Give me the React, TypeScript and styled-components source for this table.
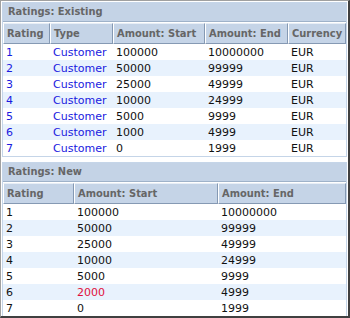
import React from "react";
import styled, { createGlobalStyle } from "styled-components";

const Global = createGlobalStyle`
  html, body { margin: 0; padding: 0; background: #fff; }
  body { font-family: "DejaVu Sans", Verdana, sans-serif; font-size: 11px; }
`;

const Frame = styled.div`
  width: 350px;
  height: 318px;
  box-sizing: border-box;
  border-style: solid;
  border-width: 1px 2px 2px 1px;
  border-color: #a0a0a0 #404040 #404040 #a0a0a0;
  padding: 1px;
  display: flex;
  flex-direction: column;
  gap: 5px;
  overflow: hidden;
`;

const Panel = styled.section`
  border: 1px solid #c5d5e8;
  display: flex;
  flex-direction: column;
`;

const TitleBar = styled.div`
  height: 18px;
  line-height: 18px;
  padding-left: 5px;
  background: #c4d3e6;
  border-bottom: 1px solid #9fb2c9;
  color: #666;
  font-family: "DejaVu Sans Condensed", "DejaVu Sans", sans-serif;
  font-weight: bold;
`;

const Table = styled.table`
  width: 100%;
  border-collapse: separate;
  border-spacing: 0;
  table-layout: fixed;
  margin-top: 1px;
`;

const Th = styled.th`
  height: 19px;
  padding: 0 0 0 3px;
  text-align: left;
  font-family: "DejaVu Sans Condensed", "DejaVu Sans", sans-serif;
  font-weight: bold;
  color: #666;
  background: #c5d4e7;
  border-top: 1px solid #e8eef6;
  border-left: 1px solid #fff;
  border-right: 1px solid #8599b3;
  border-bottom: 1px solid #8599b3;
  white-space: nowrap;
  overflow: hidden;
`;

const Tr = styled.tr<{ $alt: boolean }>`
  background: ${(p) => (p.$alt ? "#e8f2fd" : "#fff")};
`;

const Td = styled.td<{ $tone?: "link" | "red" | "plain" }>`
  height: 16px;
  padding: 0 0 0 3px;
  white-space: nowrap;
  color: ${(p) =>
    p.$tone === "link" ? "#1a1ae0" : p.$tone === "red" ? "#e0103c" : "#111"};
`;

const existing = [
  ["1", "100000", "10000000"],
  ["2", "50000", "99999"],
  ["3", "25000", "49999"],
  ["4", "10000", "24999"],
  ["5", "5000", "9999"],
  ["6", "1000", "4999"],
  ["7", "0", "1999"],
];

const fresh = [
  ["1", "100000", "10000000"],
  ["2", "50000", "99999"],
  ["3", "25000", "49999"],
  ["4", "10000", "24999"],
  ["5", "5000", "9999"],
  ["6", "2000", "4999"],
  ["7", "0", "1999"],
];

export default function App() {
  return (
    <>
      <Global />
      <Frame>
        <Panel>
          <TitleBar>Ratings: Existing</TitleBar>
          <Table>
            <colgroup>
              <col style={{ width: 47 }} />
              <col style={{ width: 63 }} />
              <col style={{ width: 92 }} />
              <col style={{ width: 83 }} />
              <col />
            </colgroup>
            <thead>
              <tr>
                <Th>Rating</Th>
                <Th>Type</Th>
                <Th>Amount: Start</Th>
                <Th>Amount: End</Th>
                <Th>Currency</Th>
              </tr>
            </thead>
            <tbody>
              {existing.map((r, i) => (
                <Tr key={r[0]} $alt={i % 2 === 1}>
                  <Td $tone="link">{r[0]}</Td>
                  <Td $tone="link">Customer</Td>
                  <Td>{r[1]}</Td>
                  <Td>{r[2]}</Td>
                  <Td>EUR</Td>
                </Tr>
              ))}
            </tbody>
          </Table>
        </Panel>
        <Panel>
          <TitleBar>Ratings: New</TitleBar>
          <Table>
            <colgroup>
              <col style={{ width: 71 }} />
              <col style={{ width: 144 }} />
              <col />
            </colgroup>
            <thead>
              <tr>
                <Th>Rating</Th>
                <Th>Amount: Start</Th>
                <Th>Amount: End</Th>
              </tr>
            </thead>
            <tbody>
              {fresh.map((r, i) => (
                <Tr key={r[0]} $alt={i % 2 === 1}>
                  <Td>{r[0]}</Td>
                  <Td $tone={r[1] === "2000" ? "red" : "plain"}>{r[1]}</Td>
                  <Td>{r[2]}</Td>
                </Tr>
              ))}
            </tbody>
          </Table>
        </Panel>
      </Frame>
    </>
  );
}
